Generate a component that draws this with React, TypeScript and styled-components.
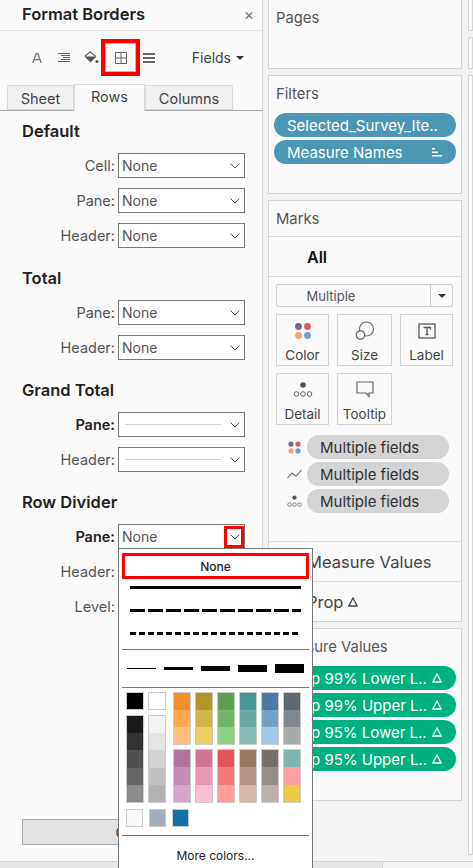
import React from 'react';
import styled, { createGlobalStyle } from 'styled-components';

const GlobalStyle = createGlobalStyle`
  html, body { margin: 0; padding: 0; }
  body { font-family: Inter, "Liberation Sans", sans-serif; color: #333; background: #f3f3f3; }
  * { box-sizing: border-box; }
`;

const Page = styled.div`
  position: relative;
  display: flex;
  flex-direction: column;
  width: 473px;
  height: 868px;
  overflow: hidden;
  background: #f3f3f3;
`;

const Main = styled.div`
  display: flex;
  flex: 1;
  min-height: 0;
`;

const BottomBar = styled.div`
  display: flex;
  height: 7px;
  border-top: 1px solid #d4d4d4;
  background: #e6e6e6;
`;

const BottomFill = styled.div`
  width: 382px;
`;

const BottomTab = styled.div`
  flex: 1;
  background: #f5f5f5;
  border-left: 1px solid #d4d4d4;
`;

const Panel = styled.aside`
  display: flex;
  flex-direction: column;
  flex: none;
  width: 263px;
  background: #fafafa;
  border-right: 1px solid #d8d8d8;
`;

const TitleBar = styled.div`
  display: flex;
  align-items: center;
  justify-content: space-between;
  height: 31px;
  padding: 0 8px 2px 22px;
  border-bottom: 1px solid #e2e2e2;
`;

const Title = styled.h1`
  margin: 0;
  font-size: 16.5px;
  font-weight: 600;
  color: #222;
`;

const Close = styled.span`
  font-size: 15px;
  color: #777;
`;

const Toolbar = styled.div`
  display: flex;
  align-items: center;
  height: 53px;
  padding: 0 18px 0 26px;
`;

const ToolIcon = styled.span<{ $width: number }>`
  display: flex;
  align-items: center;
  justify-content: center;
  flex: none;
  width: ${(p) => p.$width}px;
  height: 38px;
`;

const ActiveTool = styled.span`
  display: flex;
  align-items: center;
  justify-content: center;
  flex: none;
  width: 39px;
  height: 37px;
  border: 4px solid #f00;
  outline: 1px solid #bbb;
  outline-offset: -5px;
`;

const Fields = styled.span`
  display: flex;
  align-items: center;
  gap: 5px;
  margin-left: auto;
  font-size: 14px;
  color: #444;
`;

const Caret = styled.span`
  width: 0;
  height: 0;
  border-left: 4px solid transparent;
  border-right: 4px solid transparent;
  border-top: 4px solid #333;
`;

const Tabs = styled.div`
  display: flex;
  align-items: flex-end;
  height: 27px;
  padding-left: 7px;
  border-bottom: 1px solid #aaa;
`;

const Tab = styled.div<{ $active?: boolean; $width: number }>`
  display: flex;
  align-items: center;
  justify-content: center;
  width: ${(p) => p.$width}px;
  height: ${(p) => (p.$active ? 27 : 25)}px;
  margin-bottom: ${(p) => (p.$active ? -1 : 0)}px;
  padding: ${(p) => (p.$active ? '0 0 3px' : '1px 0 0')};
  font-size: 14.5px;
  color: #444;
  background: ${(p) => (p.$active ? '#fafafa' : '#f0f0f0')};
  border: 1px solid #dcdcdc;
  border-bottom: ${(p) => (p.$active ? 'none' : '1px solid #dcdcdc')};
`;

const Sections = styled.div`
  display: flex;
  flex-direction: column;
  flex: 1;
  padding: 10px 17px 16px 22px;
`;

const SectionTitle = styled.h2`
  display: flex;
  align-items: center;
  height: 20px;
  margin: 0 0 12px;
  font-size: 16.5px;
  font-weight: 600;
  color: #222;
`;

const Section = styled.section`
  display: flex;
  flex-direction: column;
  gap: 10px;
  margin-bottom: 20px;
`;

const Row = styled.div`
  display: flex;
  align-items: center;
  justify-content: flex-end;
  gap: 3px;
  height: 25px;
`;

const Label = styled.span<{ $bold?: boolean }>`
  font-size: 14.5px;
  font-weight: ${(p) => (p.$bold ? 600 : 400)};
  color: ${(p) => (p.$bold ? '#222' : '#555')};
`;

const Select = styled.div`
  display: flex;
  align-items: center;
  flex: none;
  width: 127px;
  height: 25px;
  padding: 0 4px 0 3px;
  font-size: 14px;
  color: #555;
  background: #fff;
  border: 1px solid #777;
`;

const SelectText = styled.span`
  flex: 1;
`;

const LineSample = styled.span`
  flex: 1;
  height: 1px;
  margin: 0 9px 0 3px;
  background: #d4d4d4;
`;

const ChevronBox = styled.span`
  position: relative;
  display: flex;
`;

const ChevronMark = styled.span`
  position: absolute;
  top: -8px;
  left: -6px;
  width: 20px;
  height: 22px;
  border: 3px solid #f00;
`;

const ClearButton = styled.div`
  display: flex;
  align-items: center;
  justify-content: center;
  width: 222px;
  height: 26px;
  margin-top: auto;
  font-size: 14px;
  color: #333;
  background: #e2e2e2;
  border: 1px solid #aaa;
`;

const Shelves = styled.div`
  display: flex;
  flex-direction: column;
  flex: none;
  gap: 6px;
  width: 194px;
  margin-left: 5px;
`;

const Card = styled.section<{ $height: number; $open?: boolean }>`
  display: flex;
  flex-direction: column;
  flex: none;
  height: ${(p) => p.$height}px;
  background: #fafafa;
  border: 1px solid #d4d4d4;
  border-top-width: ${(p) => (p.$open ? 0 : 1)}px;
`;

const CardTitle = styled.div<{ $divided?: boolean }>`
  display: flex;
  align-items: center;
  flex: none;
  height: ${(p) => (p.$divided ? 36 : 37)}px;
  padding: 0 0 ${(p) => (p.$divided ? 0 : 2)}px 7px;
  font-size: 14.8px;
  color: #555;
  border-bottom: ${(p) => (p.$divided ? '1px solid #dcdcdc' : 'none')};
`;

const PillStack = styled.div`
  display: flex;
  flex-direction: column;
  gap: 3px;
  padding: 0 5px;
`;

const Pill = styled.div<{ $bg: string }>`
  display: flex;
  align-items: center;
  justify-content: space-between;
  height: 24px;
  padding: 0 14px 0 13px;
  font-size: 15px;
  white-space: nowrap;
  color: #fff;
  background: ${(p) => p.$bg};
  border-radius: 12px;
`;

const AllRow = styled.div`
  display: flex;
  align-items: center;
  flex: none;
  height: 40px;
  padding-left: 38px;
  font-size: 16px;
  font-weight: 600;
  color: #111;
  border-bottom: 1px solid #dcdcdc;
`;

const MarkBody = styled.div`
  display: flex;
  flex-direction: column;
  flex: 1;
  padding: 7px 8px 0 7px;
`;

const MarkSelect = styled.div`
  display: flex;
  align-items: center;
  flex: none;
  height: 23px;
  font-size: 13px;
  color: #555;
  border: 1px solid #ccc;
  border-radius: 2px;
`;

const MarkSelectText = styled.span`
  flex: 1;
  padding-right: 45px;
  text-align: center;
`;

const MarkSelectArrow = styled.span`
  display: flex;
  align-items: center;
  justify-content: center;
  width: 22px;
  height: 100%;
  border-left: 1px solid #ccc;
`;

const MarkGrid = styled.div`
  display: grid;
  grid-template-columns: 53px 55px 53px;
  grid-auto-rows: 52px;
  column-gap: 8px;
  row-gap: 7px;
  margin-top: 7px;
`;

const MarkButton = styled.div`
  display: flex;
  flex-direction: column;
  align-items: center;
  gap: 5px;
  padding-top: 5px;
  font-size: 13.5px;
  color: #444;
  border: 1px solid #d4d4d4;
`;

const MarkIcon = styled.span`
  display: flex;
  align-items: center;
  justify-content: center;
  height: 22px;
`;

const FieldList = styled.div`
  display: flex;
  flex-direction: column;
  gap: 3px;
  margin-top: 10px;
`;

const FieldRow = styled.div`
  display: flex;
  align-items: center;
  gap: 3px;
  padding-left: 9px;
`;

const FieldGlyph = styled.span`
  display: flex;
  justify-content: center;
  width: 19px;
`;

const GrayPill = styled.div`
  display: flex;
  align-items: center;
  width: 142px;
  height: 24px;
  padding-left: 13px;
  font-size: 15px;
  color: #333;
  background: #d4d4d4;
  border-radius: 12px;
`;

const ShelfRow = styled.div`
  display: flex;
  align-items: center;
  gap: 5px;
  flex: none;
  height: 40px;
  padding-left: 38px;
  font-size: 16.5px;
  color: #444;
  border-top: 1px solid #dcdcdc;
`;

const Margin = styled.div`
  display: flex;
  flex-direction: column;
  flex: 1;
  gap: 6px;
  margin-left: 6px;
  padding-bottom: 6px;
`;

const MarginCard = styled.div<{ $height?: number; $open?: boolean }>`
  flex: ${(p) => (p.$height ? 'none' : 1)};
  height: ${(p) => (p.$height ? `${p.$height}px` : 'auto')};
  background: ${(p) => (p.$height ? '#fafafa' : '#fff')};
  border: 1px solid #d4d4d4;
  border-top-width: ${(p) => (p.$open ? 0 : 1)}px;
`;

const Dropdown = styled.div`
  position: absolute;
  top: 548px;
  left: 118px;
  display: flex;
  flex-direction: column;
  width: 195px;
  height: 330px;
  padding: 4px 3px 0;
  background: #fff;
  border: 1px solid #777;
`;

const NoneItem = styled.div`
  display: flex;
  align-items: center;
  justify-content: center;
  flex: none;
  height: 26px;
  font-size: 12px;
  font-weight: 500;
  color: #222;
  border: 3px solid #f00;
  border-radius: 1px;
`;

const LineList = styled.div`
  display: flex;
  flex-direction: column;
  flex: none;
  margin-top: -3px;
  padding-bottom: 4px;
`;

const LineOption = styled.div`
  display: flex;
  align-items: center;
  flex: none;
  height: 23px;
  padding: 0 8px;
`;

const Rule = styled.hr`
  flex: none;
  width: 100%;
  height: 1px;
  margin: 0;
  background: #777;
  border: none;
`;

const WeightRow = styled.div`
  display: flex;
  align-items: center;
  justify-content: space-between;
  flex: none;
  height: 37px;
  padding: 0 5px;
`;

const Weight = styled.span<{ $size: number }>`
  width: 29px;
  height: ${(p) => p.$size}px;
  background: #000;
`;

const Palette = styled.div`
  display: flex;
  flex: none;
  gap: 7px;
  padding: 4px 0 0 4px;
`;

const ColorGrid = styled.div`
  display: grid;
  grid-template-columns: repeat(6, 18px);
  gap: 4px;
`;

const GrayGrid = styled.div`
  display: grid;
  grid-template-columns: repeat(2, 18px);
  gap: 5px 4px;
`;

const Strip = styled.div`
  display: flex;
  flex-direction: column;
  outline: 1px solid #ccc;
  outline-offset: -1px;
`;

const Chip = styled.span<{ $color: string; $height: number }>`
  display: block;
  height: ${(p) => p.$height}px;
  background: ${(p) => p.$color};
`;

const RecentRow = styled.div`
  display: flex;
  flex: none;
  gap: 6px;
  padding: 6px 0 8px 4px;
`;

const RecentChip = styled.span<{ $color: string }>`
  width: 17px;
  height: 18px;
  background: ${(p) => p.$color};
  border: 1px solid #ccc;
`;

const MoreColors = styled.div`
  display: flex;
  justify-content: center;
  padding-top: 12px;
  font-size: 12px;
  color: #222;
`;

const Chevron = () => (
  <svg width="10" height="6" viewBox="0 0 10 6">
    <path d="M0.5 0.5 5 5 9.5 0.5" fill="none" stroke="#555" strokeWidth="1" />
  </svg>
);

const Dots = ({ size = 22 }: { size?: number }) => (
  <svg width={size} height={size} viewBox="0 0 22 22">
    <circle cx="6.5" cy="6.5" r="3.4" fill="#7b6294" />
    <circle cx="15.5" cy="6.5" r="3.4" fill="#e5575f" />
    <circle cx="6.5" cy="15.5" r="3.4" fill="#f5a36b" />
    <circle cx="15.5" cy="15.5" r="3.4" fill="#6f9fd0" />
  </svg>
);

const DetailIcon = ({ size = 22 }: { size?: number }) => (
  <svg width={size} height={size} viewBox="0 0 22 22" fill="none" stroke="#666">
    <circle cx="11" cy="6" r="2.8" fill="#555" stroke="none" />
    <circle cx="4.5" cy="15" r="2.3" />
    <circle cx="11" cy="15" r="2.3" />
    <circle cx="17.5" cy="15" r="2.3" />
  </svg>
);

const Delta = () => (
  <svg width="10" height="10" viewBox="0 0 10 10">
    <path d="M5 1 9.2 9H0.8Z" fill="none" stroke="currentColor" strokeWidth="1.3" />
  </svg>
);

const swatches = [
  ['#f28e2b', '#ffa94f', '#ffbe7d'],
  ['#b0962a', '#d2b344', '#f1ce63'],
  ['#59a14f', '#6fb765', '#8cd17d'],
  ['#499894', '#69aaa5', '#86bcb6'],
  ['#4e79a7', '#769fc6', '#a0cbe8'],
  ['#5f6870', '#7f888f', '#a6aaa9'],
  ['#b0739a', '#c28db3', '#d4a6c8'],
  ['#d37295', '#e899b1', '#fabfd2'],
  ['#e15759', '#f27a77', '#ff9d9a'],
  ['#9d7660', '#b89581', '#d7b5a6'],
  ['#79706e', '#968c8a', '#bab0ac'],
  ['#7fb5b0', '#ff9da7', '#edc948'],
];

const grayStrips = [
  ['#1a1a1a', '#333333', '#505050', '#666666', '#8a8a8a'],
  ['#f2f2f2', '#e4e4e4', '#d3d3d3', '#c0c0c0', '#b2b2b2'],
];

const measurePills = [
  'Prop 99% Lower L..',
  'Prop 99% Upper L..',
  'Prop 95% Lower L..',
  'Prop 95% Upper L..',
];

const FieldSelect = ({ line, text, marked }: { line?: boolean; text?: string; marked?: boolean }) => (
  <Select>
    {line ? <LineSample /> : <SelectText>{text}</SelectText>}
    <ChevronBox>
      <Chevron />
      {marked && <ChevronMark />}
    </ChevronBox>
  </Select>
);

const FormatRow = ({ label, bold, line, marked }: { label: string; bold?: boolean; line?: boolean; marked?: boolean }) => (
  <Row>
    <Label $bold={bold}>{label}</Label>
    <FieldSelect line={line} text="None" marked={marked} />
  </Row>
);

export default function App() {
  return (
    <Page>
      <GlobalStyle />
      <Main>
        <Panel>
          <TitleBar>
            <Title>Format Borders</Title>
            <Close>×</Close>
          </TitleBar>
          <Toolbar>
            <ToolIcon $width={21}>
              <svg width="10" height="10" viewBox="0 0 10 10">
                <path d="M0.8 10 4.2 0.5h1.6L9.2 10M2.2 6.6h5.6" fill="none" stroke="#777" strokeWidth="1.4" />
              </svg>
            </ToolIcon>
            <ToolIcon $width={34}>
              <svg width="12" height="10" viewBox="0 0 12 10" stroke="#666" strokeWidth="1">
                <path d="M0 .5h12M3 2.5h9M5 4.5h7M3 6.5h9M0 8.5h12" />
              </svg>
            </ToolIcon>
            <ToolIcon $width={20}>
              <svg width="15" height="13" viewBox="0 0 15 13">
                <path d="M.8 5.5 6 .8l5.8 4.7" fill="#fff" stroke="#666" strokeWidth="1.2" />
                <path d="M.5 5.5h12L6.5 11.5z" fill="#555" />
                <circle cx="13" cy="10.5" r="1.6" fill="#555" />
              </svg>
            </ToolIcon>
            <ActiveTool>
              <svg width="12" height="12" viewBox="0 0 12 12">
                <path d="M.5.5h11v11H.5zM6 .5v11M.5 6h11" fill="none" stroke="#666" />
              </svg>
            </ActiveTool>
            <ToolIcon $width={17}>
              <svg width="12" height="10" viewBox="0 0 12 10" fill="#666">
                <rect width="12" height="2" />
                <rect y="4" width="12" height="2" />
                <rect y="8" width="12" height="2" />
              </svg>
            </ToolIcon>
            <Fields>
              Fields
              <Caret />
            </Fields>
          </Toolbar>
          <Tabs>
            <Tab $width={67}>Sheet</Tab>
            <Tab $width={71} $active>Rows</Tab>
            <Tab $width={88}>Columns</Tab>
          </Tabs>
          <Sections>
            <SectionTitle>Default</SectionTitle>
            <Section>
              <FormatRow label="Cell:" />
              <FormatRow label="Pane:" />
              <FormatRow label="Header:" />
            </Section>
            <SectionTitle>Total</SectionTitle>
            <Section>
              <FormatRow label="Pane:" />
              <FormatRow label="Header:" />
            </Section>
            <SectionTitle>Grand Total</SectionTitle>
            <Section>
              <FormatRow label="Pane:" bold line />
              <FormatRow label="Header:" line />
            </Section>
            <SectionTitle>Row Divider</SectionTitle>
            <Section>
              <FormatRow label="Pane:" bold marked />
              <FormatRow label="Header:" />
              <FormatRow label="Level:" />
            </Section>
            <ClearButton>Clear</ClearButton>
          </Sections>
        </Panel>
        <Shelves>
          <Card $height={69} $open>
            <CardTitle>Pages</CardTitle>
          </Card>
          <Card $height={119}>
            <CardTitle>Filters</CardTitle>
            <PillStack>
              <Pill $bg="#4b97b5">Selected_Survey_Ite..</Pill>
              <Pill $bg="#4b97b5">
                Measure Names
                <svg width="10" height="10" viewBox="0 0 10 10" fill="#fff">
                  <rect y="1" width="3" height="1.5" />
                  <rect y="4.5" width="6" height="1.5" />
                  <rect y="8" width="10" height="1.5" />
                </svg>
              </Pill>
            </PillStack>
          </Card>
          <Card $height={422}>
            <CardTitle $divided>Marks</CardTitle>
            <AllRow>All</AllRow>
            <MarkBody>
              <MarkSelect>
                <MarkSelectText>Multiple</MarkSelectText>
                <MarkSelectArrow>
                  <Caret />
                </MarkSelectArrow>
              </MarkSelect>
              <MarkGrid>
                <MarkButton>
                  <MarkIcon><Dots /></MarkIcon>
                  Color
                </MarkButton>
                <MarkButton>
                  <MarkIcon>
                    <svg width="20" height="20" viewBox="0 0 20 20" fill="none" stroke="#666" strokeWidth="1.2">
                      <circle cx="11.5" cy="8" r="7" />
                      <circle cx="5.5" cy="14" r="4.2" fill="#fafafa" />
                    </svg>
                  </MarkIcon>
                  Size
                </MarkButton>
                <MarkButton>
                  <MarkIcon>
                    <svg width="18" height="16" viewBox="0 0 18 16">
                      <rect x="1" y="1" width="16" height="14" fill="none" stroke="#666" strokeWidth="1.4" />
                      <path d="M5.5 4.5h7v2M9 4.5v7M7.5 11.5h3" fill="none" stroke="#555" strokeWidth="1.3" />
                    </svg>
                  </MarkIcon>
                  Label
                </MarkButton>
                <MarkButton>
                  <MarkIcon><DetailIcon /></MarkIcon>
                  Detail
                </MarkButton>
                <MarkButton>
                  <MarkIcon>
                    <svg width="18" height="18" viewBox="0 0 18 18">
                      <path d="M1 1h16v11h-4v3.5L10 12H1z" fill="none" stroke="#666" strokeWidth="1.2" />
                    </svg>
                  </MarkIcon>
                  Tooltip
                </MarkButton>
              </MarkGrid>
              <FieldList>
                <FieldRow>
                  <FieldGlyph><Dots size={17} /></FieldGlyph>
                  <GrayPill>Multiple fields</GrayPill>
                </FieldRow>
                <FieldRow>
                  <FieldGlyph>
                    <svg width="15" height="10" viewBox="0 0 15 10">
                      <path d="M.5 9 5 4l4 3 5.5-6" fill="none" stroke="#666" strokeWidth="1.1" />
                    </svg>
                  </FieldGlyph>
                  <GrayPill>Multiple fields</GrayPill>
                </FieldRow>
                <FieldRow>
                  <FieldGlyph><DetailIcon size={17} /></FieldGlyph>
                  <GrayPill>Multiple fields</GrayPill>
                </FieldRow>
              </FieldList>
            </MarkBody>
            <ShelfRow>Measure Values</ShelfRow>
            <ShelfRow>
              Prop
              <Delta />
            </ShelfRow>
          </Card>
          <Card $height={173}>
            <CardTitle>Measure Values</CardTitle>
            <PillStack>
              {measurePills.map((name) => (
                <Pill key={name} $bg="#00b180">
                  {name}
                  <Delta />
                </Pill>
              ))}
            </PillStack>
          </Card>
        </Shelves>
        <Margin>
          <MarginCard $height={31} $open />
          <MarginCard $height={32} />
          <MarginCard />
        </Margin>
      </Main>
      <BottomBar>
        <BottomFill />
        <BottomTab />
      </BottomBar>
      <Dropdown>
        <NoneItem>None</NoneItem>
        <LineList>
          <LineOption>
            <svg width="172" height="3"><path d="M0 1.5H172" stroke="#000" strokeWidth="3" /></svg>
          </LineOption>
          <LineOption>
            <svg width="172" height="3"><path d="M0 1.5H172" stroke="#000" strokeWidth="3" strokeDasharray="15 3" /></svg>
          </LineOption>
          <LineOption>
            <svg width="172" height="3"><path d="M0 1.5H168" stroke="#000" strokeWidth="3" strokeDasharray="6 3" /></svg>
          </LineOption>
        </LineList>
        <Rule />
        <WeightRow>
          {[1, 3, 5, 7, 9].map((size) => (
            <Weight key={size} $size={size} />
          ))}
        </WeightRow>
        <Rule />
        <Palette>
          <GrayGrid>
            <Strip><Chip $color="#000" $height={18} /></Strip>
            <Strip><Chip $color="#fff" $height={18} /></Strip>
            {grayStrips.map((strip) => (
              <Strip key={strip[0]}>
                {strip.map((color) => (
                  <Chip key={color} $color={color} $height={17.6} />
                ))}
              </Strip>
            ))}
          </GrayGrid>
          <ColorGrid>
            {swatches.map((strip) => (
              <Strip key={strip[0]}>
                {strip.map((color) => (
                  <Chip key={color} $color={color} $height={17.7} />
                ))}
              </Strip>
            ))}
          </ColorGrid>
        </Palette>
        <RecentRow>
          <RecentChip $color="#f9f9f9" />
          <RecentChip $color="#a3adb9" />
          <RecentChip $color="#1170aa" />
        </RecentRow>
        <Rule />
        <MoreColors>More colors...</MoreColors>
      </Dropdown>
    </Page>
  );
}
